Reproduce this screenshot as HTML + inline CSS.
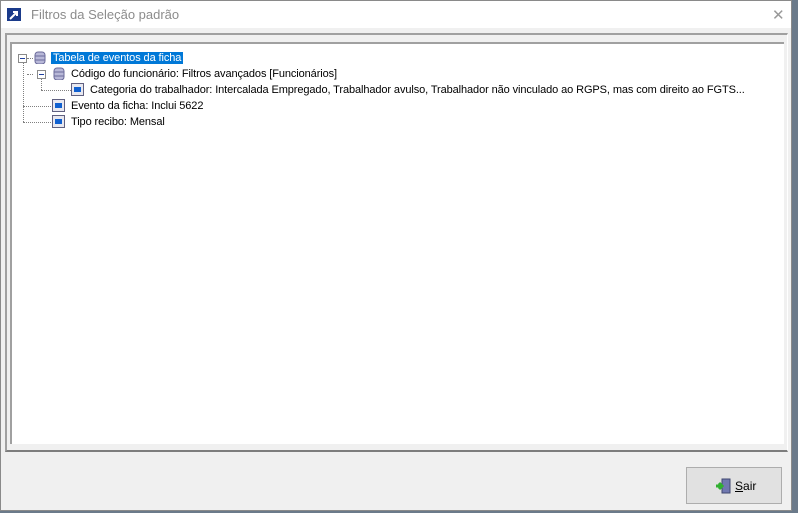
<!DOCTYPE html>
<html><head><style>
body{margin:0;width:798px;height:513px;background:#6b7a8a;font-family:"Liberation Sans",sans-serif;font-size:11px;overflow:hidden;position:relative}
.win{position:absolute;left:0;top:0;width:792px;height:511px;background:#f0f0f0;border:1px solid #8a8a8a;box-sizing:border-box}
.title{position:absolute;left:0;top:0;width:790px;height:27px;background:#fff}
.tt{position:absolute;left:30px;top:6px;color:#8c8c8c;font-size:13px}
.close{position:absolute;left:771px;top:5px;color:#999;font-size:15px}
.panel{position:absolute;left:5px;top:33px;width:783px;height:419px;border-top:2px solid #a0a0a0;border-left:2px solid #a0a0a0;border-right:1px solid #fff;border-bottom:2px solid #7d7d7d;box-sizing:border-box}
.tree{position:absolute;left:10px;top:42px;width:774px;height:402px;background:#fff;border-top:2px solid #a0a0a0;border-left:2px solid #a0a0a0;box-sizing:border-box}
.row{position:absolute;height:16px;line-height:16px;white-space:nowrap;color:#000;letter-spacing:-0.1px}
.sel{background:#0078d7;color:#fff;padding:0 2px}
.ic{position:absolute;width:13px;height:13px}
.dot{position:absolute;border-color:#808080;border-style:dotted;border-width:0}
.pm{position:absolute;width:9px;height:9px;border:1px solid #8a8a8a;background:#fff;box-sizing:border-box}
.pm:after{content:"";position:absolute;left:1px;top:3px;width:5px;height:1px;background:#2040a0}
.btn{position:absolute;left:686px;top:467px;width:96px;height:37px;border:1px solid #adadad;background:#e1e1e1;box-sizing:border-box;font-size:12px}
.btn span{position:absolute;left:48px;top:11px}
</style></head><body>
<div class="win">
<div class="title">
<svg style="position:absolute;left:6px;top:7px" width="14" height="13"><rect width="14" height="13" fill="#1a3a8a"/><path d="M3 11 L10 4 M6 4 H10 V8" stroke="#fff" stroke-width="2" fill="none"/></svg>
<span class="tt">Filtros da Seleção padrão</span><span class="close">✕</span></div>
</div>
<div class="panel"></div>
<div class="tree"></div>
<div class="dot" style="left:23px;top:62px;height:60px;border-left-width:1px"></div>
<div class="dot" style="left:27px;top:58px;width:6px;border-top-width:1px"></div>
<div class="dot" style="left:27px;top:74px;width:6px;border-top-width:1px"></div>
<div class="dot" style="left:41px;top:79px;height:11px;border-left-width:1px"></div>
<div class="dot" style="left:41px;top:90px;width:30px;border-top-width:1px"></div>
<div class="dot" style="left:23px;top:106px;width:28px;border-top-width:1px"></div>
<div class="dot" style="left:23px;top:122px;width:28px;border-top-width:1px"></div>
<div class="pm" style="left:18px;top:54px"></div>
<div class="pm" style="left:37px;top:70px"></div>
<svg class="ic" style="left:33px;top:51px" width="13" height="14"><rect x="2" y="1" width="10" height="12" rx="3" fill="#b8b8d8" stroke="#6a6a9a"/><path d="M2 5h10M2 9h10" stroke="#6a6a9a"/></svg>
<svg class="ic" style="left:52px;top:67px" width="13" height="14"><rect x="2" y="1" width="10" height="12" rx="3" fill="#b8b8d8" stroke="#6a6a9a"/><path d="M2 5h10M2 9h10" stroke="#6a6a9a"/></svg>
<svg class="ic" style="left:71px;top:83px"><rect x=".5" y=".5" width="12" height="12" fill="#e8e8f0" stroke="#606080"/><rect x="3" y="4" width="7" height="5" fill="#1060d0"/></svg>
<svg class="ic" style="left:52px;top:99px"><rect x=".5" y=".5" width="12" height="12" fill="#e8e8f0" stroke="#606080"/><rect x="3" y="4" width="7" height="5" fill="#1060d0"/></svg>
<svg class="ic" style="left:52px;top:115px"><rect x=".5" y=".5" width="12" height="12" fill="#e8e8f0" stroke="#606080"/><rect x="3" y="4" width="7" height="5" fill="#1060d0"/></svg>
<div class="row" style="left:51px;top:50px"><span class="sel">Tabela de eventos da ficha</span></div>
<div class="row" style="left:71px;top:66px">Código do funcionário: Filtros avançados [Funcionários]</div>
<div class="row" style="left:90px;top:82px">Categoria do trabalhador: Intercalada Empregado, Trabalhador avulso, Trabalhador não vinculado ao RGPS, mas com direito ao FGTS...</div>
<div class="row" style="left:71px;top:98px">Evento da ficha: Inclui 5622</div>
<div class="row" style="left:71px;top:114px">Tipo recibo: Mensal</div>
<div class="btn"><svg style="position:absolute;left:28px;top:10px" width="18" height="16"><rect x="7" y="1" width="8" height="14" fill="#7078b0" stroke="#404870"/><path d="M1 8h5M4 5l3 3-3 3" stroke="#30b030" stroke-width="3" fill="none"/></svg><span><u>S</u>air</span></div>
</body></html>
